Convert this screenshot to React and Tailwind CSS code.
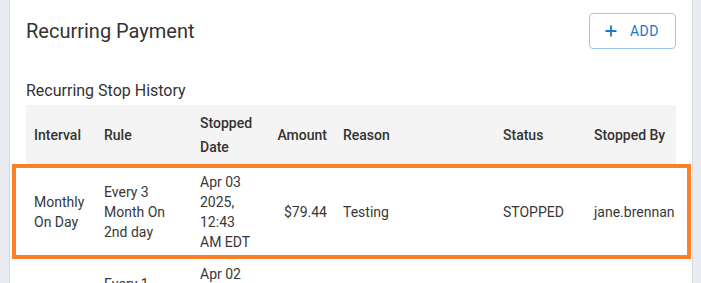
const rows = [
  {
    interval: 'Monthly On Day',
    rule: 'Every 3 Month On 2nd day',
    date: 'Apr 03 2025, 12:43 AM EDT',
    amount: '$79.44',
    reason: 'Testing',
    status: 'STOPPED',
    by: 'jane.brennan',
  },
  {
    interval: 'Monthly On Day',
    rule: 'Every 1 Month On 2nd day',
    date: 'Apr 02 2025, 11:58 PM EDT',
    amount: '$79.44',
    reason: 'Testing',
    status: 'STOPPED',
    by: 'jane.brennan',
  },
]

function PlusIcon() {
  return (
    <svg width="12" height="12" viewBox="0 0 12 12" className="shrink-0">
      <path d="M6 0.5v11M0.5 6h11" stroke="#1976d2" strokeWidth="1.8" fill="none" />
    </svg>
  )
}

export default function App() {
  return (
    <div className="h-[283px] overflow-hidden bg-[#e9edf2] pl-[9px] pr-[8px] font-['Roboto',sans-serif]">
      <div className="relative h-full border-x border-[#d6d9de] bg-white px-4 pt-[13px]">
        {/* Header */}
        <div className="flex items-center justify-between">
          <h2 className="text-[20px] leading-7 text-[#333]">Recurring Payment</h2>
          <button className="flex h-9 items-center gap-[13px] rounded border border-[#9cc6ef] pl-[15px] pr-[16px] text-[14px] tracking-[0.5px] text-[#1976d2]">
            <PlusIcon /> ADD
          </button>
        </div>

        <h3 className="mt-[30px] mb-[2px] text-base leading-6 text-[#333]">Recurring Stop History</h3>

        {/* Stop history table */}
        <table className="w-full table-fixed border-collapse text-[14px] text-[#383838]">
          <colgroup>
            <col className="w-[70px]" />
            <col className="w-[96px]" />
            <col className="w-[72px]" />
            <col className="w-[71px]" />
            <col className="w-[160px]" />
            <col className="w-[91px]" />
            <col className="w-[90px]" />
          </colgroup>
          <thead className="bg-[#f4f4f4]">
            <tr className="text-left leading-6 text-[#333]">
              <th className="px-2 pt-[6px] pb-[7px] align-middle font-medium">Interval</th>
              <th className="px-2 pt-[6px] pb-[7px] align-middle font-medium">Rule</th>
              <th className="px-2 pt-[6px] pb-[7px] align-middle font-medium">Stopped Date</th>
              <th className="px-2 pt-[6px] pb-[7px] text-right align-middle font-medium">Amount</th>
              <th className="px-2 pt-[6px] pb-[7px] align-middle font-medium">Reason</th>
              <th className="px-2 pt-[6px] pb-[7px] align-middle font-medium">Status</th>
              <th className="whitespace-nowrap pl-2 pt-[6px] pb-[7px] align-middle font-medium">Stopped By</th>
            </tr>
          </thead>
          <tbody>
            {rows.map((r, i) => (
              <tr key={i} className="leading-5">
                <td className="px-2 py-[6px] align-middle">{r.interval}</td>
                <td className="px-2 py-[6px] align-middle">{r.rule}</td>
                <td className="px-2 py-[6px] align-middle">{r.date}</td>
                <td className="px-2 py-[6px] text-right align-middle">{r.amount}</td>
                <td className="px-2 py-[6px] align-middle">{r.reason}</td>
                <td className="px-2 py-[6px] align-middle">{r.status}</td>
                <td className="whitespace-nowrap pl-2 py-[6px] align-middle">{r.by}</td>
              </tr>
            ))}
          </tbody>
        </table>

        {/* highlight around the first row */}
        <div className="pointer-events-none absolute left-[2px] top-[164px] h-[95px] w-[679px] border-4 border-[#fd7f28]" />
      </div>
    </div>
  )
}
